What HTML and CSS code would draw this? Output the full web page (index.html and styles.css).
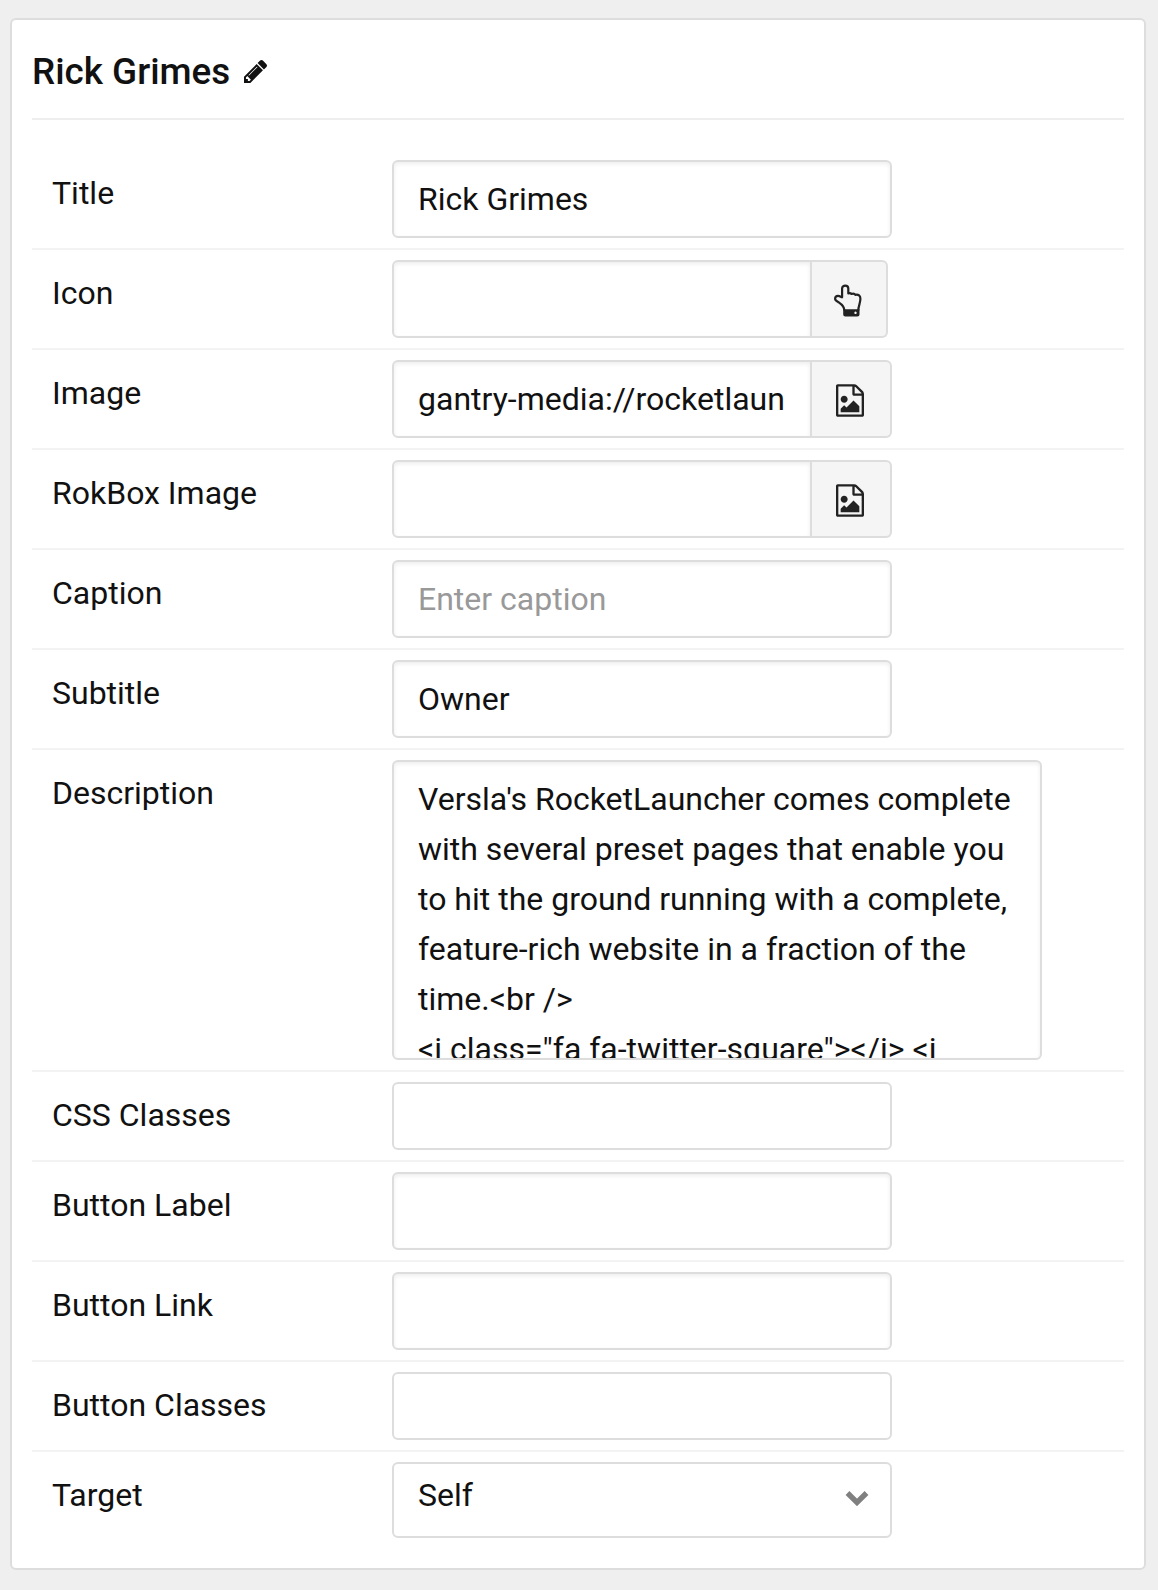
FILE: index.html
```html
<!DOCTYPE html>
<html lang="en">
<head>
<meta charset="utf-8">
<title>Rick Grimes</title>
<link rel="stylesheet" href="styles.css">
</head>
<body>
<svg class="defs" width="0" height="0">
  <symbol id="file-image" viewBox="128 0 1536 1792"><path d="M1596 380q28 28 48 76t20 88v1152q0 40-28 68t-68 28h-1344q-40 0-68-28t-28-68v-1600q0-40 28-68t68-28h896q40 0 88 20t76 48zm-444-244v376h376q-10-29-22-41l-313-313q-12-12-41-22zm384 1528v-1024h-416q-40 0-68-28t-28-68v-416h-768v1536h1280zm-128-448v320h-1024v-192l192-192 128 128 384-384zm-832-192q-80 0-136-56t-56-136 56-136 136-56 136 56 56 136-56 136-136 56z"/></symbol>
</svg>
<main class="card">
  <header class="card-header">
    <h1 class="card-title">Rick Grimes</h1>
    <svg class="pencil" viewBox="128 149 1515 1515"><path d="M491 1536l91-91-235-235-91 91v107h128v128h107zm523-928q0-22-22-22-10 0-17 7l-542 542q-7 7-7 17 0 22 22 22 10 0 17-7l542-542q7-7 7-17zm-54-192l416 416-832 832h-416v-416zm683 96q0 53-37 90l-166 166-416-416 166-165q36-38 90-38 53 0 91 38l235 234q37 39 37 91z"/></svg>
  </header>
  <form class="fields">
    <div class="row"><label class="label" for="title">Title</label><input class="input" id="title" value="Rick Grimes"></div>
    <div class="row"><label class="label" for="icon">Icon</label>
      <div class="group"><input class="input" id="icon"><button class="addon addon-narrow" type="button" aria-label="Pick icon">
        <svg class="hand" viewBox="0 0 28 33">
          <path class="hand-line" d="M10.3 26.5 C10.3 21.5 6.5 19.5 4.2 18 C2 16.9 1.1 16.3 1.1 14.8 C1.1 12.8 2.2 11.8 4 11.8 C5.8 11.8 6.8 12.9 8.1 13.3 V4.6 C8.1 0.7 14.3 0.7 14.3 4.6 V9.4 C15.6 8.9 16.8 9.2 17.5 10 C19 9.4 20.6 9.6 21.4 10.8 C24.6 10.2 26.4 11.6 26.4 14.8 C26.4 19.4 24.3 21.8 24.3 26.5"/>
          <path class="hand-cuff" fill-rule="evenodd" d="M9.2 25.3H25.5V30.4Q25.5 32.5 23.4 32.5H11.3Q9.2 32.5 9.2 30.4ZM21.5 27.6a1.2 1.2 0 1 0 .01 0Z"/>
        </svg>
      </button></div></div>
    <div class="row"><label class="label" for="image">Image</label>
      <div class="group"><input class="input" id="image" value="gantry-media://rocketlauncher"><button class="addon" type="button" aria-label="Pick image"><svg class="file"><use href="#file-image"/></svg></button></div></div>
    <div class="row"><label class="label" for="rokbox">RokBox Image</label>
      <div class="group"><input class="input" id="rokbox"><button class="addon" type="button" aria-label="Pick image"><svg class="file"><use href="#file-image"/></svg></button></div></div>
    <div class="row"><label class="label" for="caption">Caption</label><input class="input" id="caption" placeholder="Enter caption"></div>
    <div class="row"><label class="label" for="subtitle">Subtitle</label><input class="input" id="subtitle" value="Owner"></div>
    <div class="row"><label class="label" for="description">Description</label><textarea class="textarea" id="description">Versla's RocketLauncher comes complete with several preset pages that enable you to hit the ground running with a complete, feature-rich website in a fraction of the time.&lt;br /&gt;
&lt;i class="fa fa-twitter-square"&gt;&lt;/i&gt; &lt;i</textarea></div>
    <div class="row"><label class="label" for="css">CSS Classes</label><input class="input input-flat" id="css"></div>
    <div class="row"><label class="label" for="blabel">Button Label</label><input class="input" id="blabel"></div>
    <div class="row"><label class="label" for="blink">Button Link</label><input class="input" id="blink"></div>
    <div class="row"><label class="label" for="bclasses">Button Classes</label><input class="input input-flat" id="bclasses"></div>
    <div class="row"><span class="label">Target</span>
      <div class="select" role="combobox" tabindex="0"><span>Self</span>
        <svg class="chevron" viewBox="0 0 24 16"><path d="M2.5 3 L12 12.4 L21.5 3" fill="none"/></svg></div></div>
  </form>
</main>
</body>
</html>
```
FILE: styles.css
```css
* { box-sizing: border-box; }
body {
  margin: 0;
  padding: 18px 12px 20px 10px;
  background: #efefef;
  color: #111;
  font: 32px/50px Roboto, "Liberation Sans", sans-serif;
}
.defs { display: block; }
.card {
  border: 2px solid #ddd;
  border-radius: 6px;
  background: #fff;
  padding: 0 20px 20px;
}
.card-header {
  display: flex;
  align-items: center;
  gap: 14px;
  height: 100px;
  border-bottom: 2px solid #eee;
  margin-bottom: 30px;
}
.card-title { margin: 5px 0 0; font-size: 36.8px; font-weight: 500; }
.pencil { width: 23px; height: 23px; fill: #111; margin-top: 4px; }
.row {
  display: flex;
  align-items: flex-start;
  padding: 10px 0 10px 20px;
  border-bottom: 2px solid #f3f3f3;
}
.row:last-child { border-bottom: 0; }
.label { width: 340px; flex: none; padding-top: 8px; height: 58px; }
.input, .textarea, .select {
  font: inherit;
  color: inherit;
  width: 500px;
  border: 2px solid #ddd;
  border-radius: 6px;
  background: #fff;
  outline: 0;
  margin: 0;
}
.input {
  height: 78px;
  padding: 0 24px;
  box-shadow: inset 0 2px 4px rgba(0, 0, 0, .07);
}
.input::placeholder { color: #999; opacity: 1; }
.input-flat { height: 68px; box-shadow: none; }
.textarea {
  display: block;
  width: 650px;
  height: 300px;
  padding: 12px 24px;
  resize: none;
  overflow: hidden;
  box-shadow: inset 0 2px 4px rgba(0, 0, 0, .07);
}
.group { display: flex; }
.group .input { width: 420px; border-radius: 6px 0 0 6px; }
.addon {
  display: flex;
  align-items: center;
  justify-content: center;
  width: 80px;
  height: 78px;
  padding: 0 2px 0 0;
  border: 2px solid #ddd;
  border-left: 0;
  border-radius: 0 6px 6px 0;
  background: #f5f5f5;
  color: #222;
}
.addon-narrow { width: 76px; }
.file { width: 28px; height: 33px; fill: #222; margin-top: 3px; }
.hand { width: 28px; height: 33px; margin-top: 3px; }
.hand-line { fill: none; stroke: #222; stroke-width: 2.2; stroke-linejoin: round; }
.hand-cuff { fill: #222; }
.select {
  display: flex;
  justify-content: space-between;
  height: 76px;
  padding: 6px 21px 0 24px;
}
.chevron { width: 24px; height: 16px; margin-top: 20px; stroke: #808080; stroke-width: 5.4; }
```
